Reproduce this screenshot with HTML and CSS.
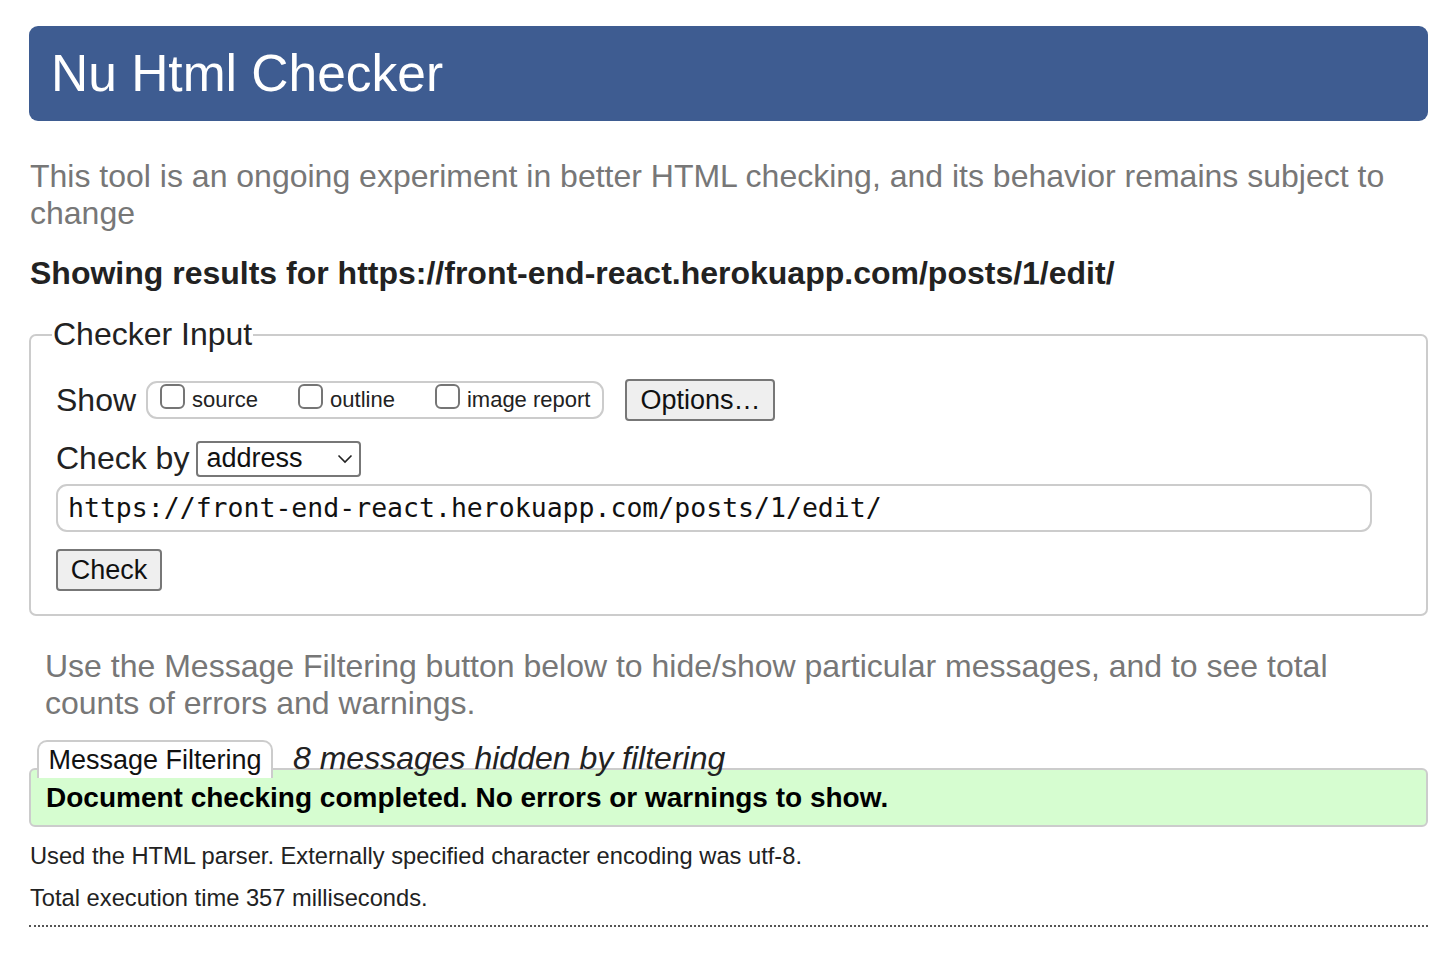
FILE: index.html
```html
<!DOCTYPE html>
<html>
<head>
<meta charset="utf-8">
<link rel="stylesheet" href="styles.css">
</head>
<body>
<div class="page">
  <h1 class="banner">Nu Html Checker</h1>
  <p class="intro">This tool is an ongoing experiment in better HTML checking, and its behavior remains subject to change</p>
  <p class="showing">Showing results for https://front-end-react.herokuapp.com/posts/1/edit/</p>
  <fieldset class="input-box">
    <legend class="legend">Checker Input</legend>
    <div class="row show-row">
      <span class="label">Show</span>
      <span class="show-group">
        <label class="opt"><span class="cb"></span>source</label>
        <label class="opt"><span class="cb"></span>outline</label>
        <label class="opt"><span class="cb"></span>image report</label>
      </span>
      <span class="btn btn-options">Options…</span>
    </div>
    <div class="row by-row">
      <span class="label">Check by</span>
      <span class="select">address<svg class="chev" width="16" height="10" viewBox="0 0 16 10"><path d="M1.5 1.5 L8 8 L14.5 1.5" fill="none" stroke="#222" stroke-width="1.6"/></svg></span>
    </div>
    <div class="url">https://front-end-react.herokuapp.com/posts/1/edit/</div>
    <div class="row"><span class="btn btn-check">Check</span></div>
  </fieldset>
  <p class="filter-note">Use the Message Filtering button below to hide/show particular messages, and to see total counts of errors and warnings.</p>
  <div class="filter-row">
    <span class="filter-btn">Message Filtering</span>
    <span class="hidden-note">8 messages hidden by filtering</span>
  </div>
  <div class="success">Document checking completed. No errors or warnings to show.</div>
  <p class="meta">Used the HTML parser. Externally specified character encoding was utf-8.</p>
  <p class="meta meta2">Total execution time 357 milliseconds.</p>
  <div class="rule"></div>
</div>
</body>
</html>
```
FILE: styles.css
```css
html, body {
  margin: 0;
  padding: 0;
  background: #fff;
}
body {
  font-family: "Liberation Sans", Arial, sans-serif;
  color: #222;
}
.page {
  width: 1399px;
  margin-left: 29px;
  padding-top: 26px;
}
.banner {
  margin: 0;
  height: 95px;
  box-sizing: border-box;
  background: #3e5c91;
  color: #fff;
  border-radius: 9px;
  font-weight: normal;
  font-size: 51.5px;
  line-height: 95px;
  padding-left: 22px;
}
.intro {
  margin: 37px 0 0 1px;
  font-size: 32px;
  line-height: 37px;
  color: #777;
}
.showing {
  margin: 23px 0 0 1px;
  font-size: 32px;
  line-height: 37px;
  font-weight: bold;
  color: #222;
}
.input-box {
  margin: 24px 0 0 0;
  border: 2px solid #ccc;
  border-radius: 7px;
  padding: 24px 25px 23px 25px;
  min-width: 0;
}
.legend {
  font-size: 32px;
  line-height: 37px;
  padding: 0 1px;
  margin-left: -4px;
  color: #222;
}
.row {
  display: flex;
  align-items: center;
}
.label {
  font-size: 32px;
  color: #222;
}
.show-row {
  margin-top: 1px;
  height: 44px;
}
.show-group {
  display: inline-flex;
  align-items: center;
  margin-left: 10px;
  height: 38px;
  box-sizing: border-box;
  border: 2px solid #ccc;
  border-radius: 11px;
  padding: 0 12px 0 12px;
  font-size: 22px;
}
.opt {
  display: inline-flex;
  align-items: center;
  margin-right: 40px;
}
.opt:last-child {
  margin-right: 0;
}
.cb {
  width: 25px;
  height: 25px;
  box-sizing: border-box;
  border: 2px solid #757575;
  border-radius: 6px;
  margin-right: 7px;
  margin-top: -7px;
  background: #fff;
}
.btn {
  display: inline-flex;
  align-items: center;
  justify-content: center;
  box-sizing: border-box;
  background: #efefef;
  border: 2px solid #777;
  border-radius: 4px;
  color: #111;
}
.btn-options {
  margin-left: 21px;
  width: 150px;
  height: 42px;
  font-size: 27px;
}
.by-row {
  margin-top: 18px;
}
.select {
  display: inline-flex;
  align-items: center;
  justify-content: space-between;
  margin-left: 7px;
  width: 165px;
  height: 36px;
  box-sizing: border-box;
  border: 2px solid #777;
  border-radius: 4px;
  padding: 0 6px 0 8px;
  font-size: 27px;
  color: #111;
}
.chev {
  display: block;
}
.url {
  margin-top: 7px;
  width: 1316px;
  height: 48px;
  box-sizing: border-box;
  border: 2px solid #ccc;
  border-radius: 11px;
  padding-left: 10px;
  font-family: "DejaVu Sans Mono", Menlo, monospace;
  font-size: 26.5px;
  line-height: 44px;
  color: #111;
}
.btn-check {
  margin-top: 17px;
  width: 106px;
  height: 42px;
  font-size: 27px;
}
.filter-note {
  margin: 32px 0 0 16px;
  font-size: 32px;
  line-height: 37px;
  color: #777;
}
.filter-row {
  display: flex;
  align-items: center;
  margin-top: 18px;
  margin-left: 8px;
  height: 36px;
  position: relative;
  z-index: 1;
}
.filter-btn {
  display: inline-flex;
  align-items: center;
  justify-content: center;
  width: 236px;
  height: 38px;
  box-sizing: border-box;
  background: #fff;
  border: 2px solid #ccc;
  border-radius: 10px 10px 0 0;
  border-bottom: none;
  font-size: 27px;
  color: #111;
  margin-top: 2px;
}
.hidden-note {
  margin-left: 20px;
  font-style: italic;
  font-size: 32px;
  color: #222;
}
.success {
  margin-top: -8px;
  height: 59px;
  box-sizing: border-box;
  background: #d6fdd0;
  border: 2px solid #ccc;
  border-radius: 6px;
  padding-left: 15px;
  font-weight: bold;
  font-size: 28px;
  line-height: 55px;
  color: #000;
}
.meta {
  margin: 15px 0 0 1px;
  font-size: 23.7px;
  line-height: 28px;
  color: #222;
}
.meta2 {
  margin-top: 14px;
}
.rule {
  margin-top: 13px;
  border-top: 2px dotted #555;
}
```
